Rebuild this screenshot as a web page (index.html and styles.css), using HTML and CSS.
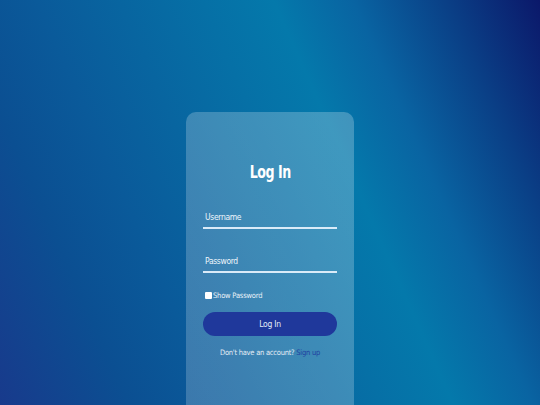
FILE: index.html
```html
<!DOCTYPE html>
<html lang="en">
<head>
<meta charset="utf-8">
<title>Log In</title>
<link rel="stylesheet" href="styles.css">
</head>
<body>
<main class="page">
  <form class="card">
    <h1 class="title"><span class="title-text">Log In</span></h1>
    <input class="field" type="text" placeholder="Username">
    <input class="field field-pass" type="password" placeholder="Password">
    <label class="show"><input class="check" type="checkbox"><span>Show Password</span></label>
    <button class="btn" type="button">Log In</button>
    <p class="signup">Don't have an account? <a href="#">Sign up</a></p>
  </form>
</main>
</body>
</html>
```
FILE: styles.css
```css
* { box-sizing: border-box; }
html, body { margin: 0; height: 100%; overflow: hidden; }
body {
  font-family: "DejaVu Sans Condensed", "Liberation Sans Narrow", "Inter", sans-serif;
  background: linear-gradient(66deg, #183a8c 0%, #0b4f92 18%, #0a5a9a 30%, #0670a6 53%, #0479ab 63%, #0964a2 74%, #0a3f86 87%, #0b186a 100%);
}
.page {
  display: flex;
  justify-content: center;
  padding-top: 112px;
  height: 100%;
  overflow: hidden;
}
.card {
  width: 168px;
  height: 293px;
  margin-bottom: -20px;
  flex-shrink: 0;
  border-radius: 10px 10px 0 0;
  background: linear-gradient(60deg, rgba(255,255,255,0.2), rgba(255,255,255,0.24));
  padding: 48px 17px 0;
  display: flex;
  flex-direction: column;
}
.title {
  margin: 0;
  height: 24px;
  line-height: 24px;
  text-align: center;
  color: #fff;
  font-size: 18px;
  font-weight: 700;
}
.title-text {
  display: inline-block;
  letter-spacing: -0.6px;
  transform: scaleX(0.78);
}
.field {
  margin-top: 24px;
  height: 21px;
  width: 100%;
  background: transparent;
  border: 0;
  border-bottom: 2px solid rgba(235, 245, 255, 0.9);
  padding: 1px 2px 3px;
  color: #fff;
  font-family: inherit;
  font-size: 8.5px;
  letter-spacing: -0.35px;
  outline: none;
}
.field::placeholder { color: #eef5fb; }
.field-pass { margin-top: 23px; }
.show {
  margin-top: 16px;
  display: flex;
  align-items: center;
  height: 12px;
  padding-left: 2px;
  color: #e8f1f8;
  font-size: 7.5px;
  letter-spacing: -0.2px;
}
.check {
  appearance: none;
  margin: 0 1px 0 0;
  width: 7px;
  height: 7px;
  background: #fff;
  border-radius: 1px;
}
.btn {
  margin-top: 11px;
  height: 24px;
  width: 100%;
  border: 0;
  border-radius: 12px;
  background: #1f389b;
  color: #e3ebf7;
  font-family: inherit;
  font-size: 8.5px;
  letter-spacing: -0.3px;
}
.signup {
  margin: 11px 0 0;
  text-align: center;
  font-size: 7.5px;
  line-height: 12px;
  letter-spacing: -0.25px;
  color: #e3ecf5;
}
.signup a { color: #1f3fa0; text-decoration: none; }
```
